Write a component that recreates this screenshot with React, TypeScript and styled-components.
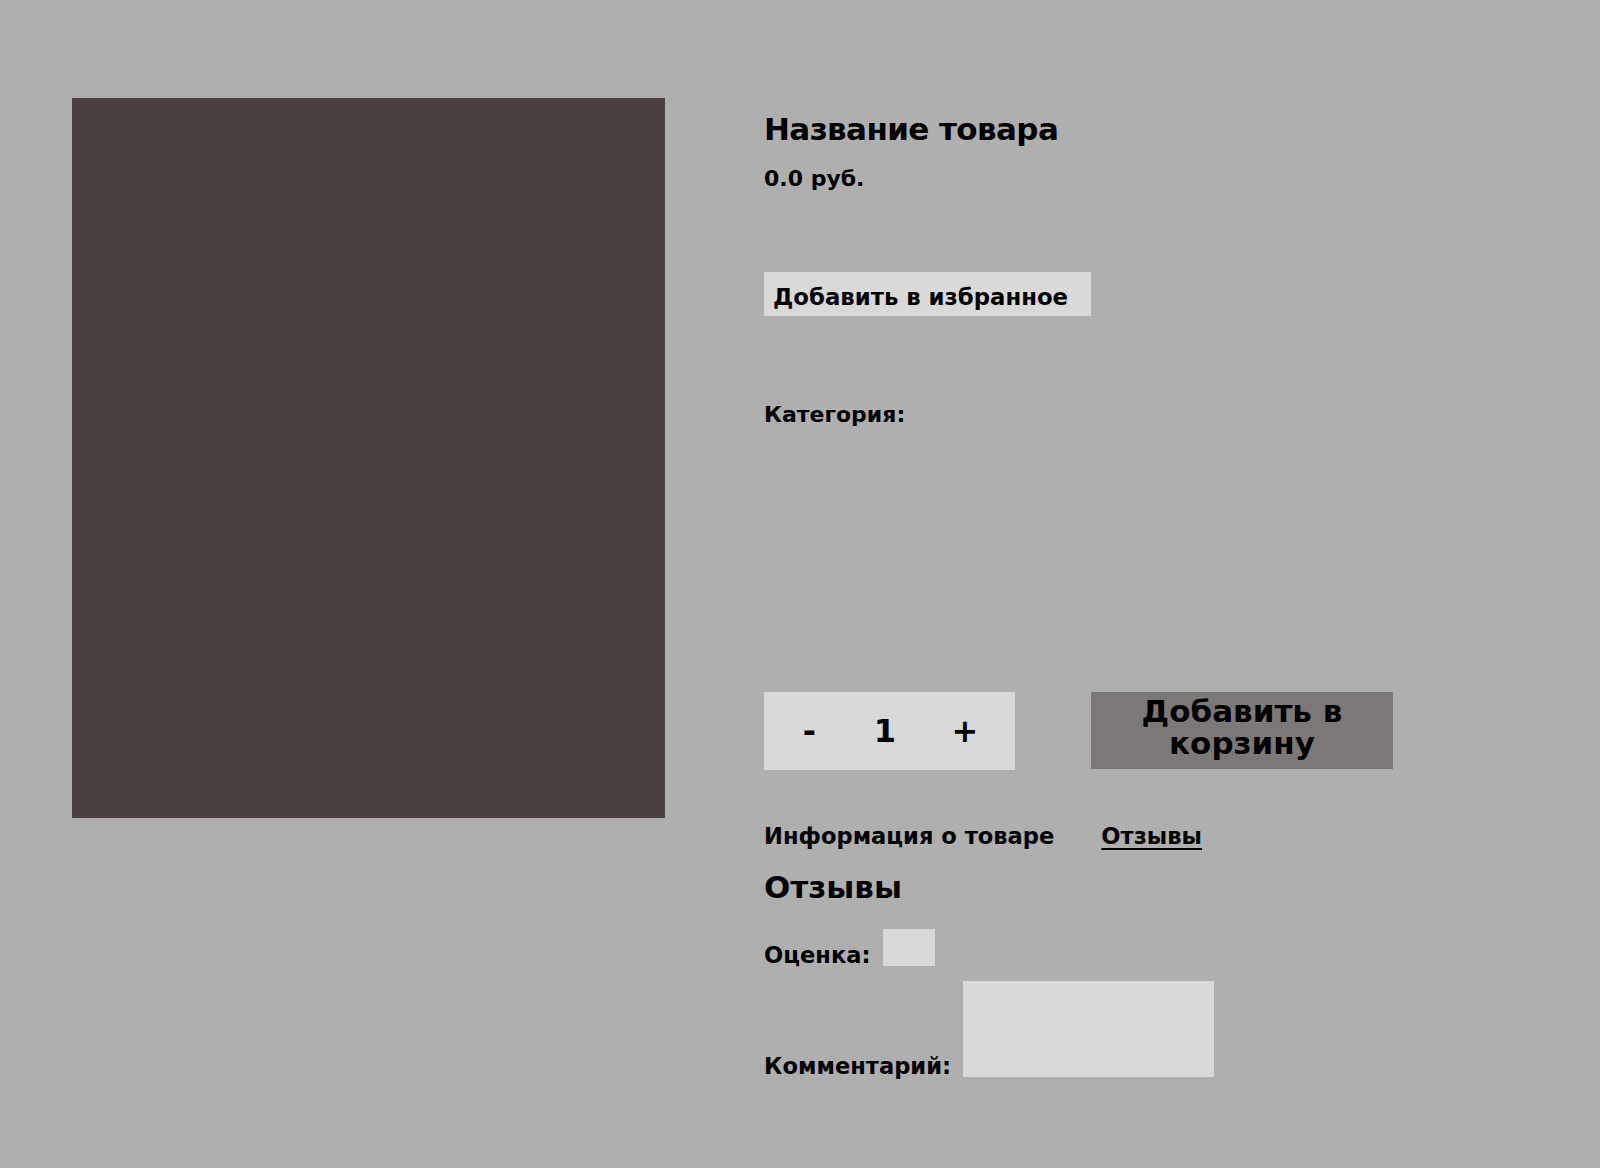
import React from "react";
import styled, { createGlobalStyle } from "styled-components";

const Global = createGlobalStyle`
  html, body {
    margin: 0;
    padding: 0;
    background: #afafaf;
  }
  body {
    font-family: "DejaVu Sans", "Noto Sans", sans-serif;
    font-weight: 700;
    color: #000;
  }
  * { box-sizing: border-box; }
`;

const Page = styled.main`
  display: flex;
  align-items: flex-start;
  gap: 99px;
  padding: 98px 0 60px 72px;
  min-height: 1168px;
`;

const Picture = styled.div`
  width: 593px;
  height: 720px;
  background: #4a4040;
  flex-shrink: 0;
`;

const Info = styled.section`
  display: flex;
  flex-direction: column;
  align-items: flex-start;
`;

const Title = styled.h1`
  margin: 11px 0 0;
  font-size: 31px;
  letter-spacing: -0.6px;
  line-height: 40px;
  font-weight: 700;
`;

const Price = styled.p`
  margin: 16px 0 0;
  font-size: 22px;
  line-height: 28px;
`;

const FavButton = styled.button`
  margin-top: 79px;
  width: 327px;
  height: 44px;
  padding: 6px 0 0 9px;
  border: none;
  background: #d9d9d9;
  font: inherit;
  font-size: 22.8px;
  line-height: 28px;
  text-align: left;
  color: #000;
`;

const Category = styled.p`
  margin: 85px 0 0;
  font-size: 22px;
  line-height: 28px;
`;

const BuyRow = styled.div`
  margin-top: 263px;
  display: flex;
  gap: 76px;
`;

const Counter = styled.div`
  width: 251px;
  height: 78px;
  background: #d9d9d9;
  display: grid;
  grid-template-columns: 91px 60px 100px;
  align-items: center;
  justify-items: center;
  font-size: 32px;
`;

const CountButton = styled.button`
  border: none;
  background: none;
  padding: 0;
  font: inherit;
  color: #000;
  line-height: 40px;
`;

const CountValue = styled.span`
  line-height: 40px;
`;

const CartButton = styled.button`
  width: 302px;
  height: 77px;
  border: none;
  background: #7c7877;
  color: #000;
  font: inherit;
  font-size: 31px;
  line-height: 32px;
  padding: 0 0 7px;
  text-align: center;
`;

const Tabs = styled.nav`
  margin-top: 52px;
  display: flex;
  gap: 47px;
  font-size: 22.6px;
  line-height: 28px;
`;

const Tab = styled.span<{ $active?: boolean }>`
  text-decoration: ${(p) => (p.$active ? "underline" : "none")};
  text-underline-offset: 4px;
  text-decoration-thickness: 2px;
`;

const ReviewsTitle = styled.h2`
  margin: 17px 0 0;
  font-size: 31px;
  line-height: 40px;
  font-weight: 700;
`;

const Field = styled.label<{ $gap: number }>`
  display: flex;
  align-items: flex-end;
  gap: 12px;
  margin-top: ${(p) => p.$gap}px;
  font-size: 22.6px;
  line-height: 28px;
`;

const LabelText = styled.span`
  margin-bottom: -3px;
`;

const RatingInput = styled.input`
  width: 52px;
  height: 37px;
  border: none;
  background: #d9d9d9;
  padding: 0;
`;

const CommentInput = styled.textarea`
  width: 251px;
  height: 96px;
  border: none;
  background: #d9d9d9;
  resize: none;
  padding: 0;
`;

export default function App() {
  return (
    <>
      <Global />
      <Page>
        <Picture />
        <Info>
          <Title>Название товара</Title>
          <Price>0.0 руб.</Price>
          <FavButton>Добавить в избранное</FavButton>
          <Category>Категория:</Category>
          <BuyRow>
            <Counter>
              <CountButton>-</CountButton>
              <CountValue>1</CountValue>
              <CountButton>+</CountButton>
            </Counter>
            <CartButton>
              Добавить в<br />корзину
            </CartButton>
          </BuyRow>
          <Tabs>
            <Tab>Информация о товаре</Tab>
            <Tab $active>Отзывы</Tab>
          </Tabs>
          <ReviewsTitle>Отзывы</ReviewsTitle>
          <Field $gap={22}>
            <LabelText>Оценка:</LabelText>
            <RatingInput />
          </Field>
          <Field $gap={15}>
            <LabelText>Комментарий:</LabelText>
            <CommentInput />
          </Field>
        </Info>
      </Page>
    </>
  );
}
